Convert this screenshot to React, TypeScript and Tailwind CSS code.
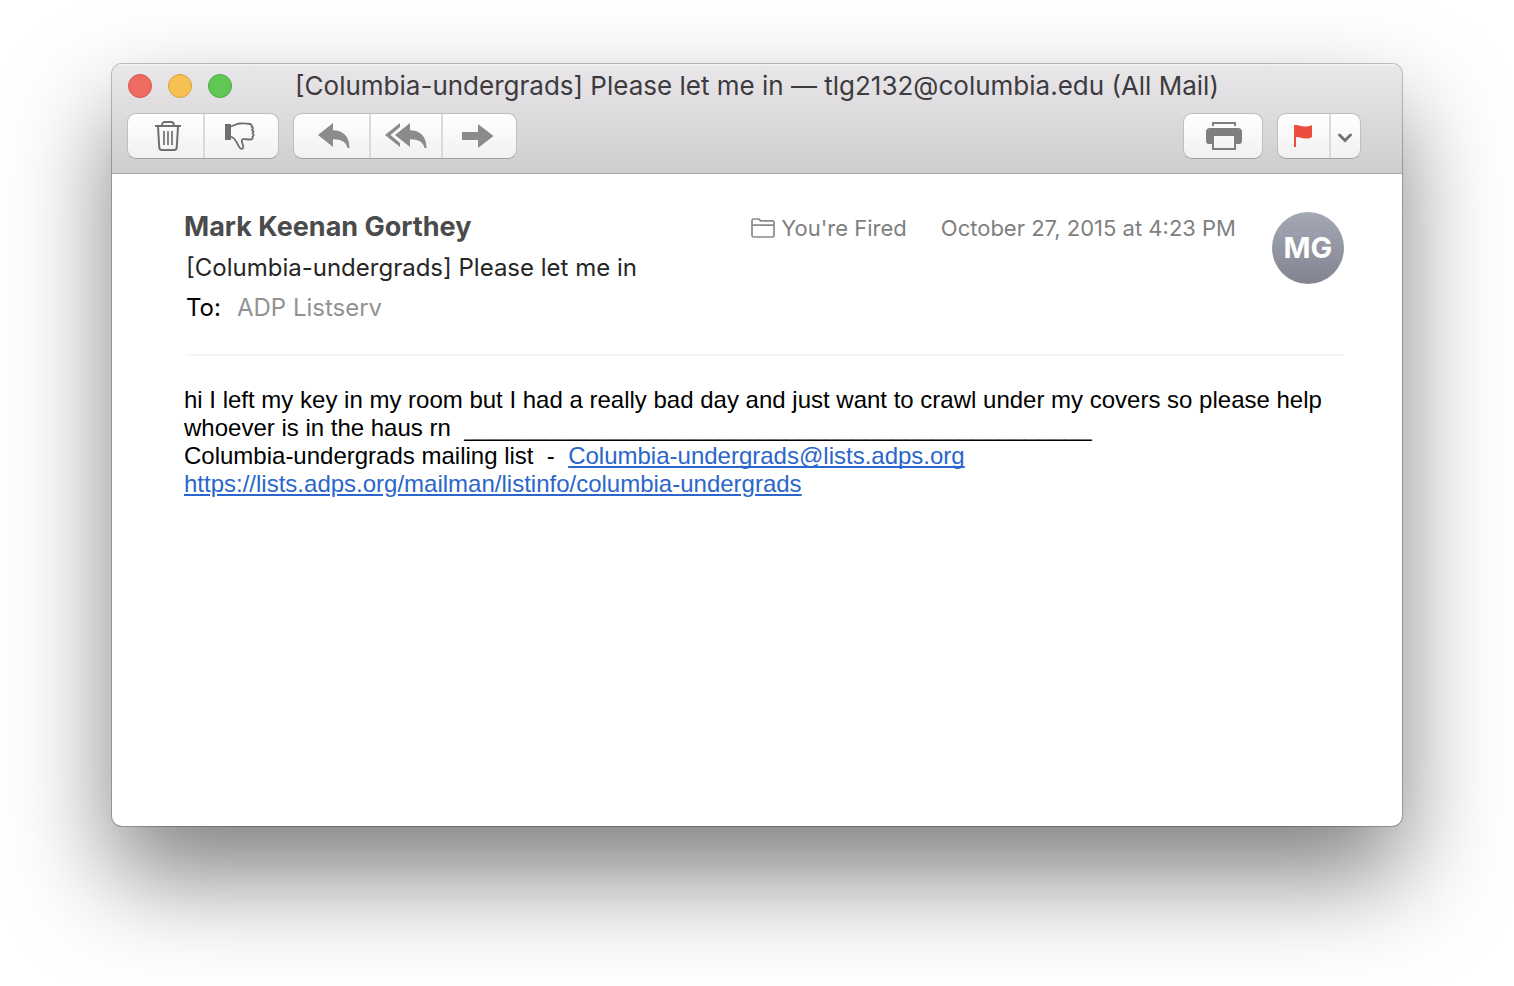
import type { ReactNode } from 'react';

const controlGroup =
  'flex h-[46px] overflow-hidden rounded-[9px] border border-[#c0bec0] border-b-[#a3a1a3] bg-linear-to-b from-white to-[#f1f1f1] bg-clip-padding';

function ToolButton({
  label,
  className,
  children,
}: {
  label: string;
  className: string;
  children: ReactNode;
}) {
  return (
    <button type="button" aria-label={label} className={`flex items-center justify-center ${className}`}>
      {children}
    </button>
  );
}

function TrashIcon() {
  return (
    <svg width="26" height="30" viewBox="0 0 26 30" fill="none" stroke="#6f6f6f" aria-hidden="true">
      <path d="M0 5h26" strokeWidth="2" />
      <path d="M7 4.500C7 2 8 1 10 1h6c2 0 3 1 3 3.500" strokeWidth="1.800" />
      <path d="M3 5.500l1.200 20.500c.1 2 1 3 2.600 3h12.400c1.600 0 2.500-1 2.600-3l1.200-20.500" strokeWidth="2" />
      <path d="M9 10v14M13 10v14M17 10v14" strokeWidth="1.700" />
    </svg>
  );
}

function ThumbDownIcon() {
  return (
    <svg width="30" height="28" viewBox="0 0 30 28" fill="none" stroke="#6f6f6f" aria-hidden="true">
      <path d="M0 2h6v16H0z" fill="#6f6f6f" stroke="none" />
      <path
        d="M6 4.500C9 3.500 11 2 14.500 1.500c4-.5 8 0 10.500.5 1.500.3 2 1.300 1.500 2.500l1.500 1.500-1 2 1.500 1.500-1 2 1.300 1.500-1.300 1.800c.6 1.900-.5 2.700-2.500 2.700-3 0-5-.8-7-.3-1.700.5-1.300 2.300-.7 4 .6 1.800 1.300 3 .9 4.300-.5 1.700-2.500 1.700-3.500.3-1.300-1.900-1.900-3.800-3.200-5.800C10.500 17.800 9 15.800 6 14.500"
        strokeWidth="1.800"
        strokeLinejoin="round"
      />
    </svg>
  );
}

function ReplyIcon() {
  return (
    <svg width="32" height="26" viewBox="0 0 32 26" fill="#8b8b8b" aria-hidden="true">
      <path d="M0 12L15 0v7.300C24.500 7.300 31.500 13 31.500 25h-2C28 19 23.500 16.300 15 16.300V24z" />
    </svg>
  );
}

function ReplyAllIcon() {
  return (
    <svg width="42" height="26" viewBox="0 0 42 26" fill="#8b8b8b" aria-hidden="true">
      <path d="M0 12L15 0v4L5.500 12 15 20v4z" />
      <path d="M10 12L25 0v7.300C34.500 7.300 41.500 13 41.500 25h-2C38 19 33.500 16.300 25 16.300V24z" />
    </svg>
  );
}

function ForwardIcon() {
  return (
    <svg width="32" height="24" viewBox="0 0 32 24" fill="#8b8b8b" aria-hidden="true">
      <path d="M0 8h16V0l15.500 12L16 24v-8H0z" />
    </svg>
  );
}

function PrinterIcon() {
  return (
    <svg width="36" height="28" viewBox="0 0 36 28" fill="#7f7f7f" aria-hidden="true">
      <path d="M6 0h24v4h-2V2H8v2H6z" />
      <path d="M4 6h28c2.500 0 4 1.500 4 4v9c0 2-1 3-3 3h-3v6H6v-6H3c-2 0-3-1-3-3v-9c0-2.500 1.500-4 4-4zM8 14v12h20V14z" />
    </svg>
  );
}

function FlagIcon() {
  return (
    <svg width="18" height="22" viewBox="0 0 18 22" fill="#ec4d3c" aria-hidden="true">
      <path d="M0 0h2c3 0 5 1.500 8.500 1.500 3 0 5.500-.5 7.500-1.500v12c-2 1.200-4.500 1.700-7 1.500-3.500-.2-5.500-1.700-9-1.500v10H0z" />
    </svg>
  );
}

function ChevronIcon() {
  return (
    <svg width="14" height="10" viewBox="0 0 14 10" fill="none" stroke="#6f6f6f" strokeWidth="2.800" aria-hidden="true">
      <path d="M1.500 2L7 7.500 12.500 2" strokeLinecap="round" />
    </svg>
  );
}

function FolderIcon() {
  return (
    <svg width="24" height="20" viewBox="0 0 24 20" fill="none" stroke="#8a8a8a" strokeWidth="1.700" aria-hidden="true">
      <path d="M1 17.500V2.500C1 1.500 1.500 1 2.500 1h4.700c.9 0 1.300.3 1.700 1l.5.900H21.500c1 0 1.500.5 1.500 1.500v13.100c0 1-.5 1.500-1.500 1.500h-19C1.500 19 1 18.500 1 17.500zM1 7.200h22" />
    </svg>
  );
}

export default function App() {
  return (
    <div className="flex min-h-screen flex-col bg-white px-28 pt-16 pb-40 font-['Inter',sans-serif]">
      <main className="flex flex-1 flex-col overflow-hidden rounded-[10px] bg-white shadow-[0_0_0_1px_rgba(0,0,0,0.24),0_50px_100px_rgba(0,0,0,0.5)]">
        <header className="border-b border-[#acaaac] bg-linear-to-b from-[#e9e7ea] to-[#d0cdd0] pb-[14px] shadow-[inset_0_2px_0_rgba(255,255,255,0.35)]">
          <div className="grid h-11 grid-cols-[1fr_auto_1fr] items-center px-4">
            <div className="flex gap-4">
              <button type="button" aria-label="Close" className="size-6 rounded-full border border-[#d9534a] bg-[#ed6b60]" />
              <button type="button" aria-label="Minimize" className="size-6 rounded-full border border-[#d9a03c] bg-[#f6c151]" />
              <button type="button" aria-label="Zoom" className="size-6 rounded-full border border-[#4aab3c] bg-[#62c655]" />
            </div>
            <h1 className="text-[26px] leading-8 whitespace-nowrap text-[#3d3b3e]">
              [Columbia-undergrads] Please let me in — tlg2132@columbia.edu (All Mail)
            </h1>
          </div>
          <div className="mt-[5px] flex justify-between pr-[41px] pl-[15px]">
            <div className="flex gap-[14px]">
              <div className={controlGroup}>
                <ToolButton label="Delete" className="w-[77px] border-r-2 border-[#dadada] pl-1">
                  <TrashIcon />
                </ToolButton>
                <ToolButton label="Junk" className="w-[73px] pr-1">
                  <ThumbDownIcon />
                </ToolButton>
              </div>
              <div className={controlGroup}>
                <ToolButton label="Reply" className="w-[77px] border-r-2 border-[#dadada] pl-1">
                  <ReplyIcon />
                </ToolButton>
                <ToolButton label="Reply All" className="w-[72px] border-r-2 border-[#dadada]">
                  <ReplyAllIcon />
                </ToolButton>
                <ToolButton label="Forward" className="w-[73px] pr-1">
                  <ForwardIcon />
                </ToolButton>
              </div>
            </div>
            <div className="flex gap-[14px]">
              <div className={controlGroup}>
                <ToolButton label="Print" className="w-[78px] pl-[2px]">
                  <PrinterIcon />
                </ToolButton>
              </div>
              <div className={controlGroup}>
                <ToolButton label="Flag" className="w-[53px] border-r-2 border-[#dadada] pr-[2px]">
                  <FlagIcon />
                </ToolButton>
                <ToolButton label="Flag options" className="w-[29px] pt-1 pr-[2px]">
                  <ChevronIcon />
                </ToolButton>
              </div>
            </div>
          </div>
        </header>

        <article className="flex-1 pr-[58px] pl-[72px]">
          <div className="flex justify-between pt-8">
            <div>
              <h2 className="text-[27px] leading-[42px] font-bold text-[#4b4b4b]">Mark Keenan Gorthey</h2>
              <p className="pl-[2px] text-[24px] leading-10 text-[#262626]">[Columbia-undergrads] Please let me in</p>
              <p className="flex gap-4 pl-[2px] text-[24px] leading-10">
                <span className="text-black">To:</span>
                <span className="text-[#929292]">ADP Listserv</span>
              </p>
            </div>
            <div className="flex items-start text-[22px] text-[#808080]">
              <span className="flex h-11 items-center gap-[6px]">
                <FolderIcon />
                You're Fired
              </span>
              <time className="ml-[34px] leading-11" dateTime="2015-10-27T16:23">
                October 27, 2015 at 4:23 PM
              </time>
              <span className="mt-[6px] ml-9 flex size-[72px] items-center justify-center rounded-full bg-linear-to-b from-[#a5a9b6] to-[#828590] text-[29px] font-bold text-white">
                MG
              </span>
            </div>
          </div>
          <hr className="mt-[26px] ml-[2px] border-t-2 border-[#f5f5f5]" />
          <div className="pt-[30px] font-['Liberation_Sans',Arial,sans-serif] text-[24px] leading-7 text-black">
            <p>
              hi I left my key in my room but I had a really bad day and just want to crawl under my covers so please help
              whoever is in the haus rn&nbsp; _______________________________________________
            </p>
            <p>
              Columbia-undergrads mailing list&nbsp; -&nbsp;{' '}
              <a href="mailto:Columbia-undergrads@lists.adps.org" className="text-[#2a66cc] underline [text-decoration-skip-ink:none]">
                Columbia-undergrads@lists.adps.org
              </a>
            </p>
            <p>
              <a href="https://lists.adps.org/mailman/listinfo/columbia-undergrads" className="text-[#2a66cc] underline">
                https://lists.adps.org/mailman/listinfo/columbia-undergrads
              </a>
            </p>
          </div>
        </article>
      </main>
    </div>
  );
}
